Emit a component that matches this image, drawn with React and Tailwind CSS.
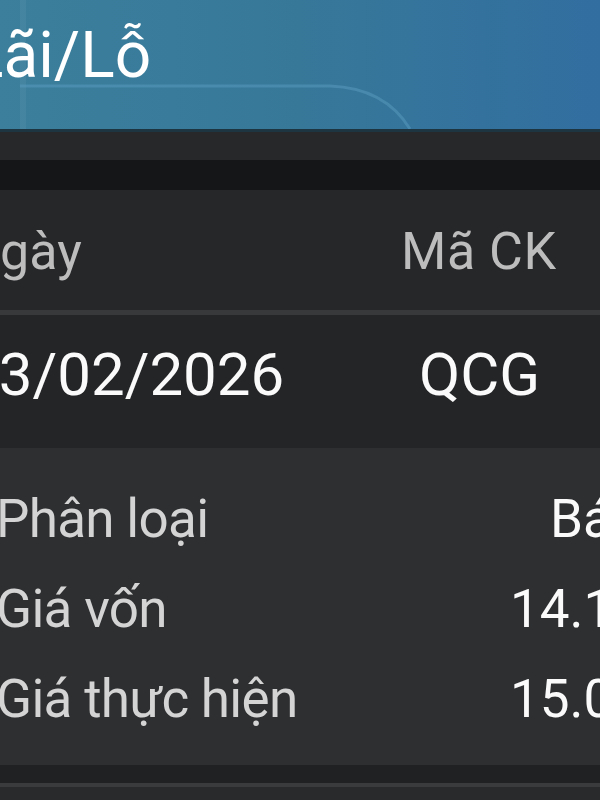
export default function App() {
  return (
    <div className="w-[600px] h-[800px] overflow-hidden bg-[#292a2c] font-['Roboto',sans-serif]">
      <div className="relative h-[129px] bg-gradient-to-r from-[#3b7f9c] via-[#377899] to-[#326ea0] overflow-hidden">
        <svg className="absolute inset-0" width="600" height="129" viewBox="0 0 600 129">
          <rect x="20" y="0" width="6" height="129" fill="#ffffff" opacity="0.05" />
          <path d="M20 86 L330 86 Q385 88 410 129" fill="none" stroke="#5a9cc0" strokeWidth="3" opacity="0.5" />
        </svg>
        <h1 className="relative text-white text-[64px] leading-none pt-[24px] ml-[-31px] whitespace-nowrap">Lãi/Lỗ</h1>
      </div>
      <div className="h-[3px] bg-[#1c3540]" />
      <div className="h-[28px] bg-[#27282a]" />
      <div className="h-[30px] bg-[#151618]" />
      <div className="flex h-[120px] bg-[#262729] text-[52px] text-[#bdbdbd] pt-[4px] leading-[116px] whitespace-nowrap">
        <span className="ml-[-37px] w-[438px] shrink-0">Ngày</span>
        <span className="shrink-0 tracking-[0.5px]">Mã CK</span>
      </div>
      <div className="h-[5px] bg-[#38393b]" />
      <div className="flex h-[133px] bg-[#242527] text-[60px] text-[#fafafa] leading-[119px] whitespace-nowrap">
        <span className="ml-[-35px] w-[454px] shrink-0">13/02/2026</span>
        <span className="shrink-0">QCG</span>
      </div>
      <div className="bg-[#2e2f31] pt-[26px] pb-[21px] text-[53px] leading-[90px] whitespace-nowrap">
        <div className="flex flex-col ml-[-4px] w-[647px]">
          <div className="flex justify-between">
            <span className="text-[#d4d4d4] tracking-[-0.7px]">Phân loại</span>
            <span className="text-[#fafafa] mr-[2px]">Bán</span>
          </div>
          <div className="flex justify-between">
            <span className="text-[#d4d4d4] tracking-[-0.7px]">Giá vốn</span>
            <span className="text-[#fafafa]">14.10</span>
          </div>
          <div className="flex justify-between">
            <span className="text-[#d4d4d4] tracking-[-0.7px]">Giá thực hiện</span>
            <span className="text-[#fafafa]">15.00</span>
          </div>
        </div>
      </div>
      <div className="h-[18px] bg-[#202123]" />
      <div className="h-[4px] bg-[#3a3b3d]" />
    </div>
  );
}
